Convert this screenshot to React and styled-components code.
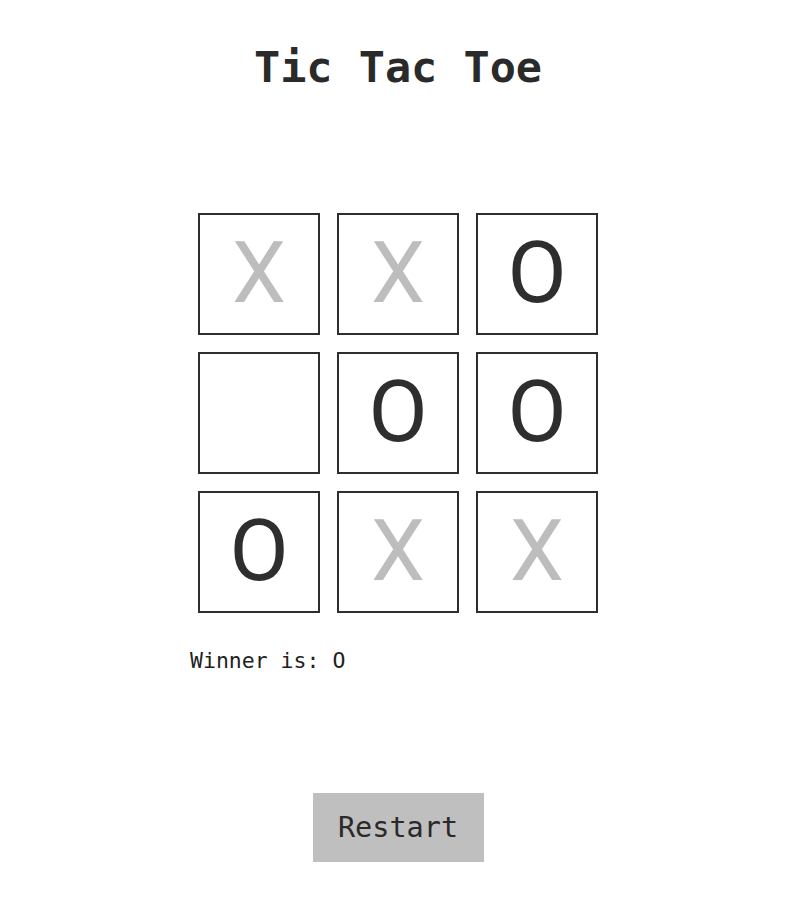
import React from 'react'
import styled, { createGlobalStyle } from 'styled-components'

const Global = createGlobalStyle`
  body {
    margin: 0;
    background: #fff;
    font-family: "DejaVu Sans Mono", "Liberation Mono", monospace;
    color: #222;
  }
`

const Page = styled.div`
  width: 796px;
  display: flex;
  flex-direction: column;
  align-items: center;
`

const Title = styled.h1`
  margin: 42px 0 0;
  font-size: 43.5px;
  line-height: 50px;
  font-weight: bold;
  color: #2a2a2a;
`

const Board = styled.div`
  margin-top: 121px;
  display: grid;
  grid-template-columns: repeat(3, 122px);
  grid-auto-rows: 122px;
  gap: 17px;
`

const Cell = styled.div`
  box-sizing: border-box;
  border: 2px solid #2e2e2e;
  display: flex;
  align-items: center;
  justify-content: center;
  font-family: Roboto, "Noto Sans", sans-serif;
  font-size: 86px;
  line-height: 1;
  color: ${p => (p.$mark === 'X' ? '#bdbdbd' : '#2e2e2e')};
  padding-bottom: 2px;
`

const Status = styled.p`
  align-self: flex-start;
  margin: 35px 0 0 190px;
  font-size: 21.5px;
  line-height: 26px;
  color: #222;
`

const RestartButton = styled.button`
  margin-top: 119px;
  width: 171px;
  height: 69px;
  border: none;
  background: #bfbfbf;
  font-family: "DejaVu Sans Mono", "Liberation Mono", monospace;
  font-size: 28.5px;
  color: #2a2a2a;
  cursor: pointer;
`

const board = ['X', 'X', 'O', '', 'O', 'O', 'O', 'X', 'X']

export default function App() {
  return (
    <Page>
      <Global />
      <Title>Tic Tac Toe</Title>
      <Board>
        {board.map((m, i) => (
          <Cell key={i} $mark={m}>{m}</Cell>
        ))}
      </Board>
      <Status>Winner is: O</Status>
      <RestartButton>Restart</RestartButton>
    </Page>
  )
}
